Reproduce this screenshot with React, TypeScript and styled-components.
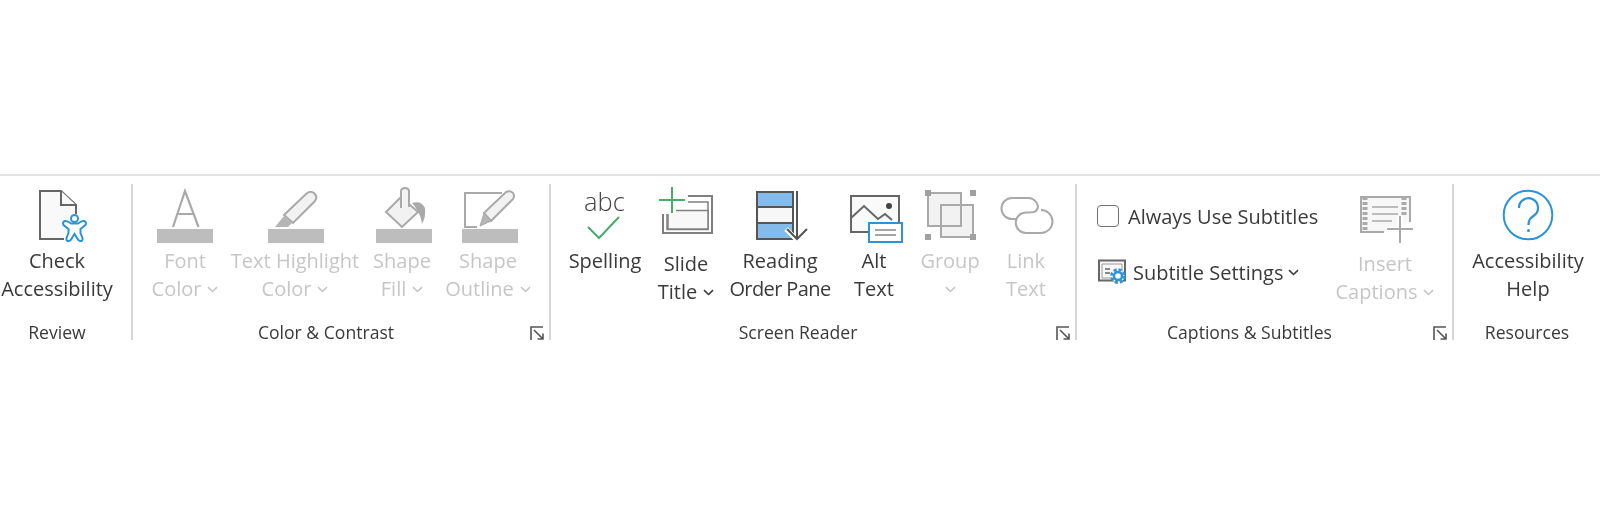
import React from "react";
import styled, { createGlobalStyle } from "styled-components";

const Global = createGlobalStyle`
  html, body { margin: 0; background: #fff; }
  body { font-family: "Open Sans", "Noto Sans", sans-serif; overflow: hidden; }
`;

const Ribbon = styled.div`
  margin-top: 174px;
  border-top: 2px solid #e2e2e2;
  padding: 8px 0 16px;
  display: flex;
  width: 1600px;
  filter: blur(0.3px);
`;

const Group = styled.section<{ $width: number; $reserve?: number; $last?: boolean }>`
  position: relative;
  box-sizing: border-box;
  width: ${(p) => p.$width}px;
  height: 156px;
  padding-right: ${(p) => p.$reserve ?? 0}px;
  border-right: ${(p) => (p.$last ? "none" : "2px solid #d6d6d6")};
  display: flex;
  flex-direction: column;
`;

const GroupBody = styled.div<{ $inset?: number }>`
  height: 138px;
  padding-left: ${(p) => p.$inset ?? 0}px;
  display: flex;
  align-items: flex-start;
`;

const GroupLabel = styled.div<{ $low?: boolean }>`
  height: 18px;
  line-height: 20px;
  margin-top: ${(p) => (p.$low ? 2 : 0)}px;
  font-size: 17.6px;
  color: #3a3a3a;
  text-align: center;
  white-space: nowrap;
`;

const Launcher = styled.svg`
  position: absolute;
  right: 4px;
  bottom: -1px;
  width: 16px;
  height: 16px;
  fill: none;
  stroke: #555;
  stroke-width: 1.6;
`;

const Command = styled.div<{ $width: number; $disabled?: boolean }>`
  width: ${(p) => p.$width}px;
  flex: none;
  display: flex;
  flex-direction: column;
  align-items: center;
  color: ${(p) => (p.$disabled ? "#c6c6c6" : "#3a3a3a")};
`;

const CommandLine = styled.div<{ $tight?: boolean }>`
  height: 28px;
  line-height: 28px;
  font-size: 20px;
  letter-spacing: ${(p) => (p.$tight ? "-0.6px" : "normal")};
  white-space: nowrap;
  display: flex;
  align-items: center;
`;

const Glyph = styled.svg`
  display: block;
  flex: none;
  fill: none;
`;

const Chevron = styled.svg<{ $flush?: boolean }>`
  width: 11px;
  height: 7px;
  margin-left: ${(p) => (p.$flush ? 0 : 6)}px;
  fill: none;
  stroke: currentColor;
  stroke-width: 1.6;
`;

const Stack = styled.div`
  box-sizing: border-box;
  width: 258px;
  flex: none;
  padding: 18px 0 0 20px;
  display: flex;
  flex-direction: column;
  gap: 28px;
`;

const StackRow = styled.div<{ $gap: number }>`
  height: 28px;
  display: flex;
  align-items: center;
  gap: ${(p) => p.$gap}px;
  color: #3a3a3a;
  font-size: 20px;
  white-space: nowrap;
`;

const CheckBox = styled.span`
  box-sizing: border-box;
  width: 22px;
  height: 22px;
  border: 1.5px solid #707070;
  border-radius: 4px;
  background: #fff;
  flex: none;
`;

const AbcText = styled.text`
  font-family: "Open Sans", "Noto Sans", sans-serif;
  font-weight: 300;
  font-size: 25.5px;
  fill: #444;
`;

const GRAY = "#a9a9a9";
const BAR = "#bdbdbd";
const DARK = "#666";
const BLUE = "#2e93d6";
const GREEN = "#45ae68";

const Down = ({ flush }: { flush?: boolean }) => (
  <Chevron viewBox="0 0 11 7" $flush={flush}>
    <path d="M1 1.2 5.5 5.5 10 1.2" />
  </Chevron>
);

const DialogMark = () => (
  <Launcher viewBox="0 0 16 16">
    <path d="M2 15V2h12" />
    <path d="M5 5l9 9M14 8.5V14H8.5" />
  </Launcher>
);

const Icon = ({ x, y = 184, w, h, children }: { x: number; y?: number; w: number; h: number; children: React.ReactNode }) => (
  <Glyph viewBox={`${x} ${y} ${w} ${h}`} width={w} height={h}>
    {children}
  </Glyph>
);

export default function App() {
  return (
    <>
      <Global />
      <Ribbon>
        <Group $width={133} $reserve={17}>
          <GroupBody>
            <Command $width={114}>
              <Icon x={0} w={114} h={63}>
                <path d="M64 239H40V191H61L76 205V214" fill="#f9f9f9" stroke={DARK} strokeWidth="2" />
                <path d="M61 191V205H76" fill="#f9f9f9" stroke={DARK} strokeWidth="2" />
                <path d="M65 221Q67 220.500 71 223.500H78Q82 220.500 84 221Q87 222 85.500 225L80.500 229V233L82.500 238Q83 241.500 80 241Q78.500 241 77 238L74.500 234 72 238Q70.500 241 69 241Q66 241.500 66.500 238L68.500 233V229L63.500 225Q62 222 65 221Z" fill="#fff" stroke={BLUE} strokeWidth="2" />
                <circle cx="74.5" cy="218.5" r="3.5" fill="#fff" stroke={BLUE} strokeWidth="2" />
              </Icon>
              <CommandLine>Check</CommandLine>
              <CommandLine>Accessibility</CommandLine>
            </Command>
          </GroupBody>
          <GroupLabel $low>Review</GroupLabel>
        </Group>

        <Group $width={418} $reserve={30}>
          <GroupBody $inset={7}>
            <Command $width={90} $disabled>
              <Icon x={140} w={90} h={63}>
                <path d="M173 227 185 191 198.5 227M177 214H194" stroke={GRAY} strokeWidth="2.2" />
                <rect x="157" y="229" width="56" height="14" fill={BAR} />
              </Icon>
              <CommandLine>Font</CommandLine>
              <CommandLine>Color<Down /></CommandLine>
            </Command>
            <Command $width={130} $disabled>
              <Icon x={230} w={130} h={63}>
                <path d="M284 215 306 194Q310 190 314 193Q318 197 315 201L293 223Z" fill="#f2f2f2" stroke={GRAY} strokeWidth="2" />
                <path d="M284 216 275 227H288L292 223Z" fill="#b5b5b5" />
                <rect x="268" y="229" width="56" height="14" fill={BAR} />
              </Icon>
              <CommandLine>Text Highlight</CommandLine>
              <CommandLine>Color<Down /></CommandLine>
            </Command>
            <Command $width={84} $disabled>
              <Icon x={360} w={84} h={63}>
                <path d="M401 197 386 212 402 227 418 212 409 204" fill="#f2f2f2" stroke={GRAY} strokeWidth="2" />
                <path d="M401 208V191.5Q401 188 405 188Q409 188 409 191.5V207" fill="#f2f2f2" stroke={GRAY} strokeWidth="2" />
                <path d="M412 203Q421 200 425 208Q426 217 422 224Q421 216 417 210Q415 206 412 203Z" fill={GRAY} />
                <rect x="376" y="229" width="56" height="14" fill={BAR} />
              </Icon>
              <CommandLine>Shape</CommandLine>
              <CommandLine>Fill<Down /></CommandLine>
            </Command>
            <Command $width={88} $disabled>
              <Icon x={444} w={88} h={63}>
                <path d="M502 193H465V227H477" stroke={GRAY} strokeWidth="2" />
                <path d="M484 213 506 192Q510 190 513 193Q515 196 513 199L491 221Z" fill="#f2f2f2" stroke={GRAY} strokeWidth="2" />
                <path d="M484 213 480 226 491 221Z" fill="#b5b5b5" stroke={GRAY} strokeWidth="1" />
                <rect x="462" y="229" width="56" height="14" fill={BAR} />
              </Icon>
              <CommandLine>Shape</CommandLine>
              <CommandLine>Outline<Down /></CommandLine>
            </Command>
          </GroupBody>
          <GroupLabel>Color &amp; Contrast</GroupLabel>
          <DialogMark />
        </Group>

        <Group $width={526} $reserve={30}>
          <GroupBody $inset={10}>
            <Command $width={88}>
              <Icon x={561} w={88} h={63}>
                <AbcText x="584" y="211">abc</AbcText>
                <path d="M588 227 599 238 619 217" stroke={GREEN} strokeWidth="2" />
              </Icon>
              <CommandLine>Spelling</CommandLine>
            </Command>
            <Command $width={74}>
              <Icon x={649} w={74} h={66}>
                <path d="M688 196H712V233H663V214" stroke="#808080" strokeWidth="2" />
                <path d="M688 202H708V229.500H667V214" stroke="#808080" strokeWidth="1.5" />
                <path d="M676 210.500H708V229H668V214" fill="#f8f8f8" stroke="#808080" strokeWidth="1.5" />
                <path d="M659 200H685M672 187V213" stroke={GREEN} strokeWidth="2" />
              </Icon>
              <CommandLine>Slide</CommandLine>
              <CommandLine>Title<Down /></CommandLine>
            </Command>
            <Command $width={114}>
              <Icon x={723} w={114} h={63}>
                <rect x="757" y="192" width="36" height="15" fill="#83bcea" stroke="#555" strokeWidth="2" />
                <rect x="757" y="207" width="36" height="16" fill="#f7f7f7" stroke="#555" strokeWidth="2" />
                <rect x="757" y="223" width="36" height="16" fill="#83bcea" stroke="#555" strokeWidth="2" />
                <path d="M786 229 797 240 808 229" stroke="#fff" strokeWidth="5" />
                <path d="M797 191V238M787 229 797 239 807 229" stroke="#555" strokeWidth="2" />
              </Icon>
              <CommandLine>Reading</CommandLine>
              <CommandLine $tight>Order Pane</CommandLine>
            </Command>
            <Command $width={74}>
              <Icon x={837} w={74} h={63}>
                <rect x="851" y="196" width="48" height="36" fill="#fafafa" stroke={DARK} strokeWidth="2" />
                <path d="M851 218 864 206 878 219 885 214 892 220" stroke={DARK} strokeWidth="2" />
                <circle cx="889" cy="206" r="3" fill="#444" />
                <rect x="869" y="223" width="33" height="19" fill="#fff" stroke={BLUE} strokeWidth="2" />
                <path d="M875 230H896M875 235H896" stroke="#888" strokeWidth="1.5" />
              </Icon>
              <CommandLine>Alt</CommandLine>
              <CommandLine>Text</CommandLine>
            </Command>
            <Command $width={78} $disabled>
              <Icon x={911} w={78} h={63}>
                <path d="M928 193H961V205H973V237H941V226H928Z" fill="#f2f2f2" />
                <rect x="928" y="193" width="33" height="33" stroke={GRAY} strokeWidth="2" />
                <rect x="941" y="205" width="32" height="32" stroke={GRAY} strokeWidth="2" />
                <path d="M925 190h6v6h-6zM970 190h6v6h-6zM925 234h6v6h-6zM970 234h6v6h-6z" fill="#a0a0a0" />
              </Icon>
              <CommandLine>Group</CommandLine>
              <CommandLine><Down flush /></CommandLine>
            </Command>
            <Command $width={74} $disabled>
              <Icon x={989} w={74} h={63}>
                <path d="M1017 219H1012A10.5 10.5 0 0 1 1012 198H1028A10 10 0 0 1 1038 206Q1038 212.500 1030 212.500H1026A10.2 10.2 0 0 0 1026 233H1041A11.500 11.500 0 0 0 1041 210" stroke={GRAY} strokeWidth="2" />
              </Icon>
              <CommandLine>Link</CommandLine>
              <CommandLine>Text</CommandLine>
            </Command>
          </GroupBody>
          <GroupLabel>Screen Reader</GroupLabel>
          <DialogMark />
        </Group>

        <Group $width={377} $reserve={30}>
          <GroupBody>
            <Stack>
              <StackRow $gap={9}>
                <CheckBox />
                Always Use Subtitles
              </StackRow>
              <StackRow $gap={5}>
                <Icon x={1097} y={260} w={31} h={28}>
                  <rect x="1099" y="262.5" width="26" height="20" fill="#f7f7f7" stroke={DARK} strokeWidth="2" />
                  <path d="M1102 266H1122V280H1102Z" stroke="#999" strokeWidth="1" />
                  <path d="M1105 271H1110M1105 275H1110" stroke="#666" strokeWidth="1.5" />
                  <circle cx="1118" cy="278" r="6.4" fill="#fff" stroke={BLUE} strokeWidth="3" strokeDasharray="3 2" />
                  <circle cx="1118" cy="278" r="4" fill="#fff" stroke={BLUE} strokeWidth="2.4" />
                </Icon>
                <span>Subtitle Settings</span>
                <Down flush />
              </StackRow>
            </Stack>
            <Command $width={100} $disabled>
              <Icon x={1335} w={100} h={66}>
                <path d="M1384 232H1361V197H1410V222" fill="#f7f7f7" stroke={GRAY} strokeWidth="2" />
                <path d="M1365 197V232M1404 197V216" stroke={GRAY} strokeWidth="5" strokeDasharray="3 2" />
                <path d="M1372 207H1398M1372 214H1398M1372 221H1392" stroke={GRAY} strokeWidth="1.5" />
                <path d="M1387 229H1413M1400 216V243" stroke="#fff" strokeWidth="5" />
                <path d="M1387 229H1413M1400 216V243" stroke={GRAY} strokeWidth="2" />
              </Icon>
              <CommandLine>Insert</CommandLine>
              <CommandLine>Captions<Down /></CommandLine>
            </Command>
          </GroupBody>
          <GroupLabel>Captions &amp; Subtitles</GroupLabel>
          <DialogMark />
        </Group>

        <Group $width={146} $last>
          <GroupBody $inset={2}>
            <Command $width={144}>
              <Icon x={1456} w={144} h={63}>
                <circle cx="1528" cy="215" r="24.3" stroke={BLUE} strokeWidth="2" />
                <path d="M1519 208A9.5 9.5 0 1 1 1534 215.5C1530 218.500 1528.500 220 1528.500 225" stroke={BLUE} strokeWidth="2.2" />
                <circle cx="1528.5" cy="230.500" r="1.5" fill={BLUE} />
              </Icon>
              <CommandLine>Accessibility</CommandLine>
              <CommandLine>Help</CommandLine>
            </Command>
          </GroupBody>
          <GroupLabel $low>Resources</GroupLabel>
        </Group>
      </Ribbon>
    </>
  );
}
